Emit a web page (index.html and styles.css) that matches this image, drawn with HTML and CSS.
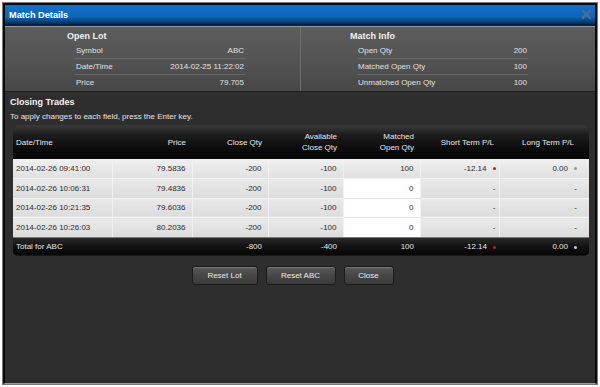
FILE: index.html
```html
<!DOCTYPE html>
<html lang="en">
<head>
  <meta charset="UTF-8" />
  <title>Match Details</title>
  <link rel="stylesheet" href="styles.css">
</head>
<body>

<div class="window">
  <div class="titlebar">
    <span class="title">Match Details</span>
    <svg class="close-x" width="9" height="9" viewBox="0 0 9 9">
      <path d="M1 1 L8 8 M8 1 L1 8" stroke="#4d6e93" stroke-width="2.4" stroke-linecap="square"/>
    </svg>
  </div>

  <div class="info">
    <div class="info-col">
      <div class="info-head">Open Lot</div>
      <div class="info-list left">
        <div class="info-row"><span>Symbol</span><span>ABC</span></div>
        <div class="info-row"><span>Date/Time</span><span>2014-02-25 11:22:02</span></div>
        <div class="info-row"><span>Price</span><span>79.705</span></div>
      </div>
    </div>
    <div class="info-col right-col">
      <div class="info-head">Match Info</div>
      <div class="info-list right">
        <div class="info-row"><span>Open Qty</span><span>200</span></div>
        <div class="info-row"><span>Matched Open Qty</span><span>100</span></div>
        <div class="info-row"><span>Unmatched Open Qty</span><span>100</span></div>
      </div>
    </div>
  </div>

  <div class="content">
    <div class="section-title">Closing Trades</div>
    <div class="hint">To apply changes to each field, press the Enter key.</div>

    <div class="grid">
      <table>
        <colgroup>
          <col style="width:99px"><col style="width:80px"><col style="width:76px"><col style="width:75px">
          <col style="width:77px"><col style="width:79px"><col style="width:90px">
        </colgroup>
        <thead>
          <tr>
            <th class="first">Date/Time</th>
            <th>Price</th>
            <th>Close Qty</th>
            <th>Available<br>Close Qty</th>
            <th>Matched<br>Open Qty</th>
            <th class="short-h">Short Term P/L</th>
            <th class="long-h">Long Term P/L</th>
          </tr>
        </thead>
        <tbody>
          <tr>
            <td class="first">2014-02-26 09:41:00</td>
            <td>79.5836</td>
            <td>-200</td>
            <td>-100</td>
            <td>100</td>
            <td class="short">-12.14<span class="dot red"></span></td>
            <td class="long">0.00<span class="dot gray"></span></td>
          </tr>
          <tr>
            <td class="first">2014-02-26 10:06:31</td>
            <td>79.4836</td>
            <td>-200</td>
            <td>-100</td>
            <td class="edit">0</td>
            <td class="short">-</td>
            <td class="long">-</td>
          </tr>
          <tr>
            <td class="first">2014-02-26 10:21:35</td>
            <td>79.6036</td>
            <td>-200</td>
            <td>-100</td>
            <td class="edit">0</td>
            <td class="short">-</td>
            <td class="long">-</td>
          </tr>
          <tr>
            <td class="first">2014-02-26 10:26:03</td>
            <td>80.2036</td>
            <td>-200</td>
            <td>-100</td>
            <td class="edit">0</td>
            <td class="short">-</td>
            <td class="long">-</td>
          </tr>
        </tbody>
        <tfoot>
          <tr>
            <td class="first">Total for ABC</td>
            <td></td>
            <td>-800</td>
            <td>-400</td>
            <td>100</td>
            <td class="short">-12.14<span class="dot red"></span></td>
            <td class="long">0.00<span class="dot light"></span></td>
          </tr>
        </tfoot>
      </table>
    </div>

    <div class="buttons">
      <button class="btn lot">Reset Lot</button>
      <button class="btn abc">Reset ABC</button>
      <button class="btn close">Close</button>
    </div>
  </div>
</div>

</body>
</html>
```

FILE: styles.css
```css
* { box-sizing: border-box; }

html, body {
  margin: 0;
  padding: 0;
  background: #fff;
}

body {
  padding: 3px;
  font-family: "Liberation Sans", Arial, sans-serif;
  font-size: 8px;
  color: #e6e6e6;
}

.window {
  width: 594px;
  height: 381px;
  border: 2px solid #0b0b0b;
  border-bottom-color: #9a9a9a;
  border-bottom-width: 1px;
  box-shadow: 0 0 0 1px #7a7a7a;
  background: #2f2e2e;
  display: flex;
  flex-direction: column;
}

/* title bar */
.titlebar {
  height: 21px;
  flex: none;
  display: flex;
  align-items: center;
  justify-content: space-between;
  padding: 0 4px 2px 4px;
  background: linear-gradient(to bottom, #1472c8 0%, #0b66ba 55%, #074785 75%, #031a33 100%);
}

.title {
  font-size: 9.2px;
  font-weight: bold;
  color: #fff;
}

.close-x { display: block; }

/* top info panel */
.info {
  height: 66px;
  flex: none;
  display: grid;
  grid-template-columns: 295px 1fr;
  background: linear-gradient(to bottom, #5d5d5d 0%, #525252 60%, #474747 100%);
  border-top: 1px solid #9a9a9a;
  border-bottom: 1px solid #1e1e1e;
}

.info-col {
  padding: 3px 0 0 0;
}

.right-col {
  border-left: 1px solid #6e6e6e;
}

.info-head {
  font-size: 9px;
  font-weight: bold;
  color: #f2f2f2;
  height: 13px;
  line-height: 13px;
}

.info-col:first-child .info-head { padding-left: 62px; }
.right-col .info-head { padding-left: 49px; }

.info-list.left { margin-left: 70px; width: 170px; }
.info-list.right { margin-left: 56px; width: 171px; }

.info-row {
  display: flex;
  justify-content: space-between;
  height: 16px;
  line-height: 15px;
  padding: 0 1px;
  color: #e0e0e0;
  border-bottom: 1px solid #666;
}

.info-row:last-child { border-bottom: none; }

/* lower area */
.content {
  flex: 1;
  padding: 3px 6px 0 5px;
}

.section-title {
  font-size: 9px;
  font-weight: bold;
  color: #f4f4f4;
  height: 14px;
  line-height: 14px;
}

.hint {
  height: 15px;
  line-height: 15px;
  color: #e4e4e4;
}

.grid {
  margin: 1px 0 0 3px;
  width: 576px;
  border-radius: 5px;
  overflow: hidden;
  background: #0a0a0a;
}

table {
  width: 576px;
  border-collapse: collapse;
  table-layout: fixed;
}

th, td {
  text-align: right;
  padding: 0 6px 0 0;
  white-space: nowrap;
  font-weight: normal;
}

.first {
  text-align: left;
  padding-left: 3px;
}

thead th {
  height: 34px;
  line-height: 11px;
  color: #e8e8e8;
  background: linear-gradient(to bottom, #3a3a3a 0%, #1c1c1c 30%, #0c0c0c 70%, #060606 100%);
}

.short-h { padding-right: 5px; }
.long-h { padding-right: 15px; }

tbody td {
  height: 19.5px;
  color: #2b2b2b;
  background: linear-gradient(to bottom, #e9e9e9 0%, #dcdcdc 100%);
  border-left: 1px solid #f1f1f1;
  border-bottom: 1px solid #f3f3f3;
}

tbody tr:first-child td {
  background: linear-gradient(to bottom, #f0f0f0 0%, #e0e0e0 100%);
}

tbody td.first { border-left: none; }

tbody td.edit {
  background: #fff;
  border-bottom-color: #e2e2e2;
}

tbody tr:last-child td { border-bottom: 1px solid #7a7a7a; }

td.short { padding-right: 3px; }
td.long { padding-right: 12px; }

.dot {
  display: inline-block;
  width: 3px;
  height: 3px;
  border-radius: 50%;
  margin-left: 6px;
  vertical-align: middle;
}

.dot.red { background: #e01010; }
.dot.gray { background: #9a9a9a; }
.dot.light { background: #c8c8c8; }

tfoot td {
  height: 19px;
  color: #e6e6e6;
  background: linear-gradient(to bottom, #2a2a2a 0%, #121212 50%, #050505 100%);
}

/* buttons */
.buttons {
  display: flex;
  justify-content: center;
  gap: 8px;
  margin-top: 10px;
  padding-right: 14px;
}

.btn {
  height: 19px;
  font-family: "Liberation Sans", Arial, sans-serif;
  font-size: 8px;
  color: #ececec;
  background: linear-gradient(to bottom, #5a5a5a 0%, #474747 50%, #3a3a3a 100%);
  border: 1px solid #1c1c1c;
  border-radius: 3px;
  box-shadow: inset 0 1px 0 #777;
  padding: 0;
  cursor: pointer;
}

.btn.lot { width: 66px; }
.btn.abc { width: 70px; }
.btn.close { width: 50px; }
```
